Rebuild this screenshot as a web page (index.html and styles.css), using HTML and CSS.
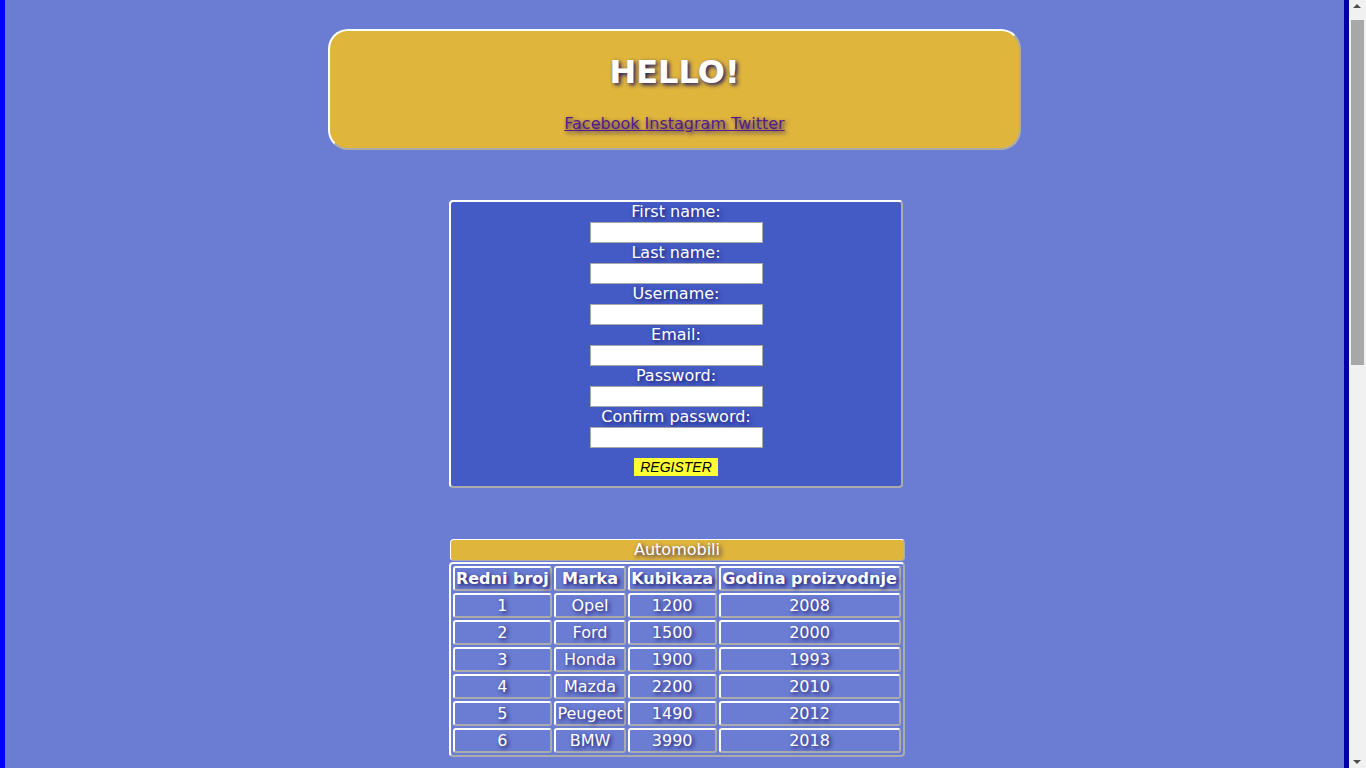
FILE: index.html
```html
<!DOCTYPE html>
<html lang="en">
<head>
<meta charset="utf-8">
<title>Hello</title>
<link rel="stylesheet" href="styles.css">
</head>
<body>
<div class="page">
  <header class="hero">
    <h1 class="hero-title">HELLO!</h1>
    <p class="hero-links"><a href="#" class="social">Facebook Instagram Twitter</a></p>
  </header>

  <form class="register">
    <label class="field-label" for="fn">First name:</label>
    <input class="field" id="fn" type="text">
    <label class="field-label" for="ln">Last name:</label>
    <input class="field" id="ln" type="text">
    <label class="field-label" for="un">Username:</label>
    <input class="field" id="un" type="text">
    <label class="field-label" for="em">Email:</label>
    <input class="field" id="em" type="text">
    <label class="field-label" for="pw">Password:</label>
    <input class="field" id="pw" type="password">
    <label class="field-label" for="cpw">Confirm password:</label>
    <input class="field" id="cpw" type="password">
    <button class="register-btn" type="button">REGISTER</button>
  </form>

  <table class="cars">
    <caption class="cars-caption">Automobili</caption>
    <thead>
      <tr><th>Redni broj</th><th>Marka</th><th>Kubikaza</th><th>Godina proizvodnje</th></tr>
    </thead>
    <tbody>
      <tr><td>1</td><td>Opel</td><td>1200</td><td>2008</td></tr>
      <tr><td>2</td><td>Ford</td><td>1500</td><td>2000</td></tr>
      <tr><td>3</td><td>Honda</td><td>1900</td><td>1993</td></tr>
      <tr><td>4</td><td>Mazda</td><td>2200</td><td>2010</td></tr>
      <tr><td>5</td><td>Peugeot</td><td>1490</td><td>2012</td></tr>
      <tr><td>6</td><td>BMW</td><td>3990</td><td>2018</td></tr>
    </tbody>
  </table>
</div>
<div class="scrollbar" aria-hidden="true">
  <span class="sb-arrow sb-up"></span>
  <span class="sb-thumb"></span>
  <span class="sb-arrow sb-down"></span>
</div>
</body>
</html>
```

FILE: styles.css
```css
html {
  background: #6a7dd2;
  overflow: hidden;
}
body {
  margin: 0 17px 0 0;
  border-left: 5px solid #0000ff;
  border-right: 5px solid #0000ab;
  min-height: 1634px;
  font-family: "DejaVu Sans", Verdana, sans-serif;
  font-size: 16px;
  color: #ffffff;
}
.page {
  display: flex;
  flex-direction: column;
  align-items: center;
  padding-top: 29px;
}
.hero {
  box-sizing: border-box;
  width: 693px;
  background: #dfb53c;
  border: 2px outset #ffffff;
  border-radius: 20px;
  text-align: center;
}
.hero-title {
  margin: 23px 0 23px;
  font-size: 32px;
  font-weight: bold;
  line-height: 37px;
  color: #ffffff;
  text-shadow: 2px 2px 4px #1c1466;
}
.hero-links {
  margin: 0 0 15px;
  line-height: 19px;
}
.social {
  color: #551a8b;
  text-shadow: 2px 2px 4px #2a1a66;
}
.register {
  box-sizing: border-box;
  width: 454px;
  margin: 50px 0 0 3px;
  background: #445bc6;
  border: 2px outset #ffffff;
  border-radius: 4px;
  display: flex;
  flex-direction: column;
  align-items: center;
  padding-bottom: 10px;
}
.field-label {
  line-height: 20px;
  color: #ffffff;
  text-shadow: 2px 2px 4px #1c1466;
}
.field {
  box-sizing: border-box;
  width: 173px;
  height: 21px;
  margin: 0;
  border: 1px solid #a9a9a9;
  background: #ffffff;
  padding: 1px 2px;
}
.register-btn {
  margin-top: 10px;
  height: 18px;
  padding: 0 6px;
  border: none;
  background: #ffff33;
  color: #000000;
  font-family: "Liberation Sans", Arial, sans-serif;
  font-style: italic;
  font-size: 14px;
  line-height: 18px;
}
.cars {
  width: 456px;
  margin: 51px 0 0 4px;
  border: 2px outset #ffffff;
  border-radius: 4px;
  border-spacing: 2px;
  text-shadow: 2px 2px 4px #1c1466;
}
.cars-caption {
  background: #dfb53c;
  border: 1px outset #ffffff;
  border-radius: 4px;
  line-height: 20px;
  margin: 0 0 1px 1px;
}
.cars th,
.cars td {
  border: 2px outset #ffffff;
  border-radius: 3px;
  padding: 1px;
  text-align: center;
  line-height: 19px;
  white-space: nowrap;
}
.cars th {
  font-weight: bold;
}
.scrollbar {
  position: fixed;
  top: 0;
  right: 0;
  width: 17px;
  height: 100vh;
  background: #f1f1f1;
}
.sb-thumb {
  position: absolute;
  left: 2px;
  right: 2px;
  top: 20px;
  height: 345px;
  background: #a8a8a8;
}
.sb-arrow {
  position: absolute;
  left: 4px;
  width: 0;
  height: 0;
  border-left: 4px solid transparent;
  border-right: 4px solid transparent;
}
.sb-up {
  top: 4px;
  border-bottom: 4px solid #505050;
}
.sb-down {
  bottom: 4px;
  border-top: 4px solid #505050;
}
```
